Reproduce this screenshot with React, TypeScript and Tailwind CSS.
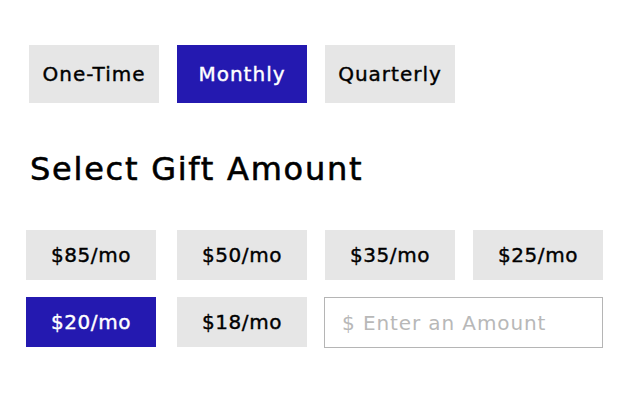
const frequencies = ['One-Time', 'Monthly', 'Quarterly']
const amounts = ['$85/mo', '$50/mo', '$35/mo', '$25/mo', '$20/mo', '$18/mo']

export default function App() {
  const frequency = 'Monthly'
  const amount = '$20/mo'

  return (
    <div className="min-h-[400px] bg-white pl-[26px] pt-[45px] font-['DejaVu_Sans',sans-serif] text-black">
      {/* gift frequency */}
      <div className="ml-[3px] flex gap-[18px]">
        {frequencies.map((f) => (
          <button
            key={f}
            className={
              'flex h-[58px] w-[130px] items-center justify-center text-[20px] tracking-[1px] [-webkit-text-stroke:0.4px_currentColor] ' +
              (f === frequency ? 'bg-[#2419b0] text-white' : 'bg-[#e6e6e6] text-black')
            }
          >
            {f}
          </button>
        ))}
      </div>

      <h2 className="ml-[4px] mt-[46px] text-[32px] leading-[40px] tracking-[1.75px] [-webkit-text-stroke:0.6px_black]">
        Select Gift Amount
      </h2>

      {/* amount options */}
      <div className="mt-[41px] grid w-[577px] grid-cols-[133px_130px_130px_130px] gap-x-[18px] gap-y-[17px]">
        {amounts.map((a) => (
          <button
            key={a}
            className={
              'flex h-[50px] w-[130px] items-center justify-center text-[20px] tracking-[0.6px] [-webkit-text-stroke:0.4px_currentColor] ' +
              (a === amount ? 'bg-[#2419b0] text-white' : 'bg-[#e6e6e6] text-black')
            }
          >
            {a}
          </button>
        ))}
        <input
          type="text"
          placeholder="$ Enter an Amount"
          className="col-span-2 -ml-px h-[51px] border border-[#b5b5b5] bg-white px-[17px] text-[20px] tracking-[0.9px] text-black outline-none placeholder:text-[#b8b8b8]"
        />
      </div>
    </div>
  )
}
